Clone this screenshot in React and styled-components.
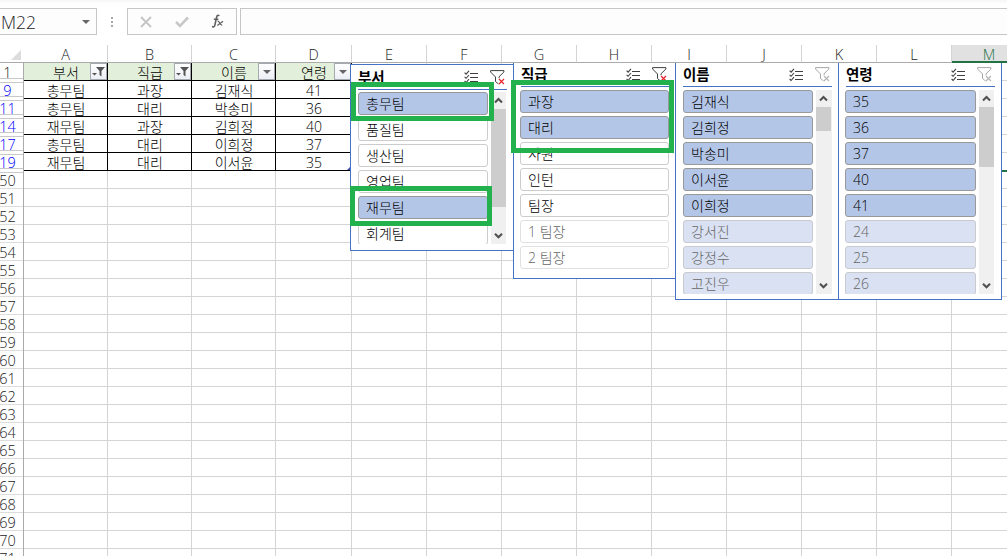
import React from "react";
import styled, { createGlobalStyle, css } from "styled-components";

const GlobalStyle = createGlobalStyle`
  * { box-sizing: border-box; }
  body { margin: 0; background: #fff; overflow: hidden; }
`;

const COLUMNS = [
  ["A", 84], ["B", 84], ["C", 84], ["D", 76], ["E", 75], ["F", 75], ["G", 75],
  ["H", 75], ["I", 75], ["J", 75], ["K", 75], ["L", 75], ["M", 75],
];
const template = COLUMNS.map(([, w]) => `${w}px`).join(" ");

const Window = styled.div`
  width: 1007px;
  height: 556px;
  overflow: hidden;
  display: flex;
  flex-direction: column;
  background: #fff;
  color: #000;
  font-family: "Open Sans", "Noto Sans CJK KR", sans-serif;
  font-size: 14px;
  font-weight: 300;
`;

const FormulaBar = styled.div`
  height: 45px;
  flex: none;
  display: flex;
  align-items: flex-start;
  padding-top: 8px;
  background: linear-gradient(#f5f5f5, #fff 4px);
`;
const BarBox = styled.div`
  height: 27px;
  display: flex;
  align-items: center;
  border: 1px solid #c6c6c6;
  background: #fdfdfd;
`;
const NameBox = styled(BarBox)`
  width: 97px;
  border-left: 0;
  padding: 0 6px 0 1px;
  justify-content: space-between;
  font-size: 17.5px;
  color: #222;
`;
const Dots = styled.div`
  width: 30px;
  height: 27px;
  display: flex;
  flex-direction: column;
  align-items: center;
  justify-content: center;
  gap: 2px;
  i { width: 2px; height: 2px; background: #a6a6a6; }
`;
const Tools = styled(BarBox)`
  width: 110px;
  padding: 0 11px 0 12px;
  justify-content: space-between;
`;
const FormulaInput = styled(BarBox)`
  flex: 1;
  margin-left: 3px;
  border-right: 0;
`;

const Sheet = styled.div`
  position: relative;
  flex: none;
  width: 1050px;
`;
const Line = styled.div`
  display: flex;
  height: 18px;
`;
const Cells = styled.div`
  display: grid;
  grid-template-columns: ${template};
`;
const Corner = styled.div`
  width: 24px;
  height: 18px;
  display: flex;
  justify-content: flex-end;
  padding: 5px 3px 0 0;
  border-bottom: 1px solid #ababab;
`;
const ColumnHead = styled.div`
  height: 18px;
  line-height: 19px;
  text-align: center;
  font-size: 14.5px;
  color: ${(p) => (p.$active ? "#217346" : "#222")};
  background: ${(p) => (p.$active ? "#e1e1e1" : "#fff")};
  border-bottom: ${(p) => (p.$active ? "2px solid #217346" : "1px solid #ababab")};
  border-right: 1px solid #d4d4d4;
`;
const HeadSlot = styled.div`
  width: 24px;
  height: 18px;
  border-right: 1px solid #ababab;
`;
const RowHead = styled.div`
  height: 18px;
  padding-right: 8px;
  display: flex;
  justify-content: center;
  line-height: 19px;
  white-space: nowrap;
  font-size: 14.5px;
  color: ${(p) => (p.$filtered ? "#0000ff" : "#222")};
  border-bottom: 1px solid #dcdcdc;
  ${(p) => p.$gap && css`
    height: 16px;
    line-height: 19px;
    border-bottom-color: #c8c8c8;
  `}
  ${(p) => p.$after && css`
    border-top: 1px solid #c8c8c8;
    margin-top: 1px;
    height: ${p.$gap ? 15 : 17}px;
    line-height: 16px;
  `}
`;
const Cell = styled.div`
  position: relative;
  height: 18px;
  line-height: 19px;
  padding-left: 1px;
  text-align: center;
  border-right: 1px solid #d4d4d4;
  border-bottom: 1px solid #d4d4d4;
  ${(p) => p.$data && css`
    border-color: #000;
    background: ${p.$head ? "#e2efda" : "#fff"};
  `}
`;
const FilterButton = styled.span`
  position: absolute;
  right: 0;
  top: 0;
  width: 17px;
  height: 17px;
  display: flex;
  align-items: center;
  justify-content: center;
  border: 1px solid #a5a9b0;
  background: linear-gradient(#fff, #eceff5);
`;
const TableCorner = styled.i`
  position: absolute;
  right: 0;
  bottom: 0;
  border: 2px solid #3f51b5;
  border-top-color: transparent;
  border-left-color: transparent;
`;
const SelectionEdge = styled.div`
  position: absolute;
  left: 1002px;
  top: 125px;
  width: 10px;
  height: 2px;
  background: #217346;
`;

const SlicerBox = styled.section`
  position: absolute;
  left: ${(p) => p.$x}px;
  top: ${(p) => p.$y}px;
  width: ${(p) => p.$w}px;
  height: ${(p) => p.$h}px;
  border: 1px solid #4472c4;
  border-top-width: ${(p) => (p.$topped ? 1 : 0)}px;
  background: #fff;
  padding: 0 5px 0 ${(p) => p.$pad}px;
`;
const SlicerHeader = styled.header`
  height: ${(p) => (p.$tall ? 25 : 24)}px;
  width: 149px;
  margin-left: ${(p) => p.$inset}px;
  padding-right: ${(p) => 2 + p.$inset}px;
  display: flex;
  align-items: center;
  border-bottom: 1px solid #4472c4;
  svg { flex: none; }
  svg + svg { margin-left: 12px; }
`;
const SlicerTitle = styled.h2`
  flex: 1;
  margin: 0;
  font-size: 14.5px;
  font-weight: 700;
  line-height: 23px;
`;
const SlicerBody = styled.div`
  display: flex;
  gap: 3px;
  margin-top: ${(p) => p.$top}px;
  height: ${(p) => p.$h}px;
  overflow: hidden;
`;
const Items = styled.div`
  width: ${(p) => p.$w}px;
  flex: none;
  display: flex;
  flex-direction: column;
  gap: 3px;
`;
const Item = styled.div`
  height: 23px;
  flex: none;
  line-height: 21px;
  padding-left: 7px;
  border: 1px solid #ccc;
  border-radius: 3px;
  ${(p) => p.$state === "on" && css`
    background: #b4c6e7;
    border-color: #999;
  `}
  ${(p) => p.$state === "onEmpty" && css`
    background: #d9e1f2;
    border-color: #c8cad0;
    color: #666;
  `}
  ${(p) => p.$state === "empty" && css`
    border-color: #e0e0e0;
    color: #666;
  `}
`;
const Scrollbar = styled.div`
  width: ${(p) => p.$w}px;
  height: 100%;
  display: flex;
  flex-direction: column;
  align-items: flex-start;
  background: #f0f0f0;
  svg { flex: none; }
`;
const Thumb = styled.div`
  width: 15px;
  height: ${(p) => p.$h}px;
  margin-bottom: auto;
  background: #cdcdcd;
`;
const Highlight = styled.div`
  position: absolute;
  left: ${(p) => p.$x}px;
  top: ${(p) => p.$y}px;
  width: ${(p) => p.$w}px;
  height: ${(p) => p.$h}px;
  border: 5px solid #22b14c;
`;

const Arrow = () => (
  <svg width="8" height="4" viewBox="0 0 8 4"><path d="M0 0h8L4 4z" fill="#666" /></svg>
);
const FunnelArrow = () => (
  <svg width="13" height="12" viewBox="0 0 13 12">
    <path d="M0 7h5L2.5 9.5z" fill="#555" />
    <path d="M4 1h9L9.5 5v5.5L7.5 9V5z" fill="#555" />
  </svg>
);
const MultiSelect = () => (
  <svg width="14" height="14" viewBox="0 0 14 14" fill="none" stroke="#404040">
    <path d="M6 3.5h8M6 7.5h8M6 11.5h8" />
    <path d="M.6 2.6l1.5 1.5L5 .8M.6 6.8l1.5 1.5L5 5M.6 11l1.5 1.5L5 9.2" strokeWidth="1.1" />
  </svg>
);
const ClearFilter = ({ active }) => (
  <svg width="15" height="15" viewBox="0 0 15 15" fill="none" stroke={active ? "#404040" : "#a6a6a6"}>
    <path d="M8.5 14L5.5 11.5V7L.6 2V.6h13.3V2L9 6.8v1.4" />
    <path d="M9 9l5 5M14 9l-5 5" stroke={active ? "#e8262b" : "#b5b5b5"} strokeWidth="1.2" />
  </svg>
);
const Chevron = ({ down }) => (
  <svg width="15" height="17" viewBox="0 0 15 17" fill="none" stroke="#505050" strokeWidth="2.1">
    <path d={down ? "M4 6.8l3.5 3.5L11 6.8" : "M4 10.5L7.5 7l3.5 3.5"} />
  </svg>
);
const CancelIcon = () => (
  <svg width="12" height="12" viewBox="0 0 12 12" stroke="#c4c4c4" strokeWidth="1.8" fill="none">
    <path d="M1 1l10 10M11 1L1 11" />
  </svg>
);
const EnterIcon = () => (
  <svg width="14" height="12" viewBox="0 0 14 12" stroke="#c8c8c8" strokeWidth="2.6" fill="none">
    <path d="M1 6l4 4L13 1.5" />
  </svg>
);
const FunctionIcon = () => (
  <svg width="14" height="15" viewBox="0 0 14 15" stroke="#606060" fill="none">
    <path d="M8.3 1.8C6.8.6 6 1.5 5.6 3.2L3.8 11.3C3.4 13 2.3 13.2 1 12.5M2.8 5.2h4.6" strokeWidth="1.6" />
    <path d="M6.6 7.2c1.8-.8 2 4.4 4.6 4M12 7.2L6.3 11.4" strokeWidth="1.2" />
  </svg>
);

const DATA = [
  ["1", "부서", "직급", "이름", "연령"],
  ["9", "총무팀", "과장", "김재식", "41"],
  ["11", "총무팀", "대리", "박송미", "36"],
  ["14", "재무팀", "과장", "김희정", "40"],
  ["17", "총무팀", "대리", "이희정", "37"],
  ["19", "재무팀", "대리", "이서윤", "35"],
];
const EMPTY_ROWS = Array.from({ length: 22 }, (_, i) => String(50 + i));

const SLICERS = [
  {
    title: "부서", x: 350, y: 19, w: 165, h: 187, topped: true, pad: 7, inset: 0, active: true,
    top: 2, bodyH: 152, itemW: 130, thumb: 98, bar: 15,
    items: [["총무팀", "on"], ["품질팀"], ["생산팀"], ["영업팀"], ["재무팀", "on"], ["회계팀"]],
  },
  {
    title: "직급", x: 513, y: 18, w: 163, h: 216, pad: 6, inset: 1, active: true,
    top: 3, bodyH: 184, itemW: 149,
    items: [["과장", "on"], ["대리", "on"], ["사원"], ["인턴"], ["팀장"], ["1 팀장", "empty"], ["2 팀장", "empty"]],
  },
  {
    title: "이름", x: 675, y: 18, w: 164, h: 237, pad: 7, inset: 0,
    top: 3, bodyH: 204, itemW: 130, thumb: 24, bar: 16,
    items: [["김재식", "on"], ["김희정", "on"], ["박송미", "on"], ["이서윤", "on"], ["이희정", "on"],
      ["강서진", "onEmpty"], ["강정수", "onEmpty"], ["고진우", "onEmpty"]],
  },
  {
    title: "연령", x: 838, y: 18, w: 164, h: 237, pad: 6, inset: 1,
    top: 3, bodyH: 204, itemW: 131, thumb: 60, bar: 15,
    items: [["35", "on"], ["36", "on"], ["37", "on"], ["40", "on"], ["41", "on"],
      ["24", "onEmpty"], ["25", "onEmpty"], ["26", "onEmpty"]],
  },
];

const Slicer = ({ s }) => (
  <SlicerBox $x={s.x} $y={s.y} $w={s.w} $h={s.h} $topped={s.topped} $pad={s.pad}>
    <SlicerHeader $inset={s.inset} $tall={s.topped}>
      <SlicerTitle>{s.title}</SlicerTitle>
      <MultiSelect />
      <ClearFilter active={s.active} />
    </SlicerHeader>
    <SlicerBody $top={s.top} $h={s.bodyH}>
      <Items $w={s.itemW}>
        {s.items.map(([label, state]) => <Item key={label} $state={state}>{label}</Item>)}
      </Items>
      {s.thumb && (
        <Scrollbar $w={s.bar}>
          <Chevron />
          <Thumb $h={s.thumb} />
          <Chevron down />
        </Scrollbar>
      )}
    </SlicerBody>
  </SlicerBox>
);

export default function App() {
  return (
    <Window>
      <GlobalStyle />
      <FormulaBar>
        <NameBox><span>M22</span><Arrow /></NameBox>
        <Dots><i /><i /><i /></Dots>
        <Tools><CancelIcon /><EnterIcon /><FunctionIcon /></Tools>
        <FormulaInput />
      </FormulaBar>
      <Sheet>
        <Line>
          <Corner><svg width="10" height="10"><path d="M10 0v10H0z" fill="#dcdcdc" /></svg></Corner>
          <Cells>
            {COLUMNS.map(([name]) => <ColumnHead key={name} $active={name === "M"}>{name}</ColumnHead>)}
          </Cells>
        </Line>
        {DATA.map(([num, ...values], r) => (
          <Line key={num}>
            <HeadSlot><RowHead $filtered={r > 0} $gap $after={r > 0}>{num}</RowHead></HeadSlot>
            <Cells>
              {COLUMNS.map(([name], c) => (
                <Cell key={name} $data={c < 4} $head={r === 0}>
                  {values[c]}
                  {r === 0 && c < 4 && <FilterButton>{c < 2 ? <FunnelArrow /> : <Arrow />}</FilterButton>}
                  {r === 5 && c === 3 && <TableCorner />}
                </Cell>
              ))}
            </Cells>
          </Line>
        ))}
        {EMPTY_ROWS.map((num, r) => (
          <Line key={num}>
            <HeadSlot><RowHead $after={r === 0}>{num}</RowHead></HeadSlot>
            <Cells>{COLUMNS.map(([name]) => <Cell key={name} />)}</Cells>
          </Line>
        ))}
        <SelectionEdge />
        {SLICERS.map((s) => <Slicer key={s.title} s={s} />)}
        <Highlight $x={351} $y={37} $w={143} $h={39} />
        <Highlight $x={350} $y={141} $w={142} $h={40} />
        <Highlight $x={511} $y={35} $w={163} $h={73} />
      </Sheet>
    </Window>
  );
}
